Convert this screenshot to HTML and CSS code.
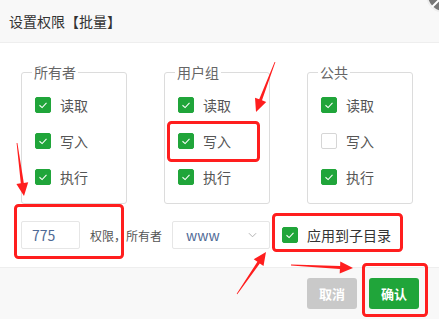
FILE: index.html
```html
<!DOCTYPE html>
<html lang="zh-CN">
<head>
<meta charset="utf-8">
<title>设置权限【批量】</title>
<link rel="stylesheet" href="styles.css">
</head>
<body>
<div class="dialog">
  <div class="head">设置权限【批量】</div>
  <div class="body">
    <div class="groups">
      <fieldset class="group">
        <legend>所有者</legend>
        <label class="opt"><span class="cb on"><svg viewBox="0 0 16 16"><polyline points="4,8.3 7,11 12,5.5"/></svg></span>读取</label>
        <label class="opt"><span class="cb on"><svg viewBox="0 0 16 16"><polyline points="4,8.3 7,11 12,5.5"/></svg></span>写入</label>
        <label class="opt"><span class="cb on"><svg viewBox="0 0 16 16"><polyline points="4,8.3 7,11 12,5.5"/></svg></span>执行</label>
      </fieldset>
      <fieldset class="group">
        <legend>用户组</legend>
        <label class="opt"><span class="cb on"><svg viewBox="0 0 16 16"><polyline points="4,8.3 7,11 12,5.5"/></svg></span>读取</label>
        <label class="opt"><span class="cb on"><svg viewBox="0 0 16 16"><polyline points="4,8.3 7,11 12,5.5"/></svg></span>写入</label>
        <label class="opt"><span class="cb on"><svg viewBox="0 0 16 16"><polyline points="4,8.3 7,11 12,5.5"/></svg></span>执行</label>
      </fieldset>
      <fieldset class="group">
        <legend>公共</legend>
        <label class="opt"><span class="cb on"><svg viewBox="0 0 16 16"><polyline points="4,8.3 7,11 12,5.5"/></svg></span>读取</label>
        <label class="opt"><span class="cb"></span>写入</label>
        <label class="opt"><span class="cb on"><svg viewBox="0 0 16 16"><polyline points="4,8.3 7,11 12,5.5"/></svg></span>执行</label>
      </fieldset>
    </div>
    <div class="row">
      <input class="num" type="text" value="775">
      <span class="hint">权限，所有者</span>
      <div class="select">www<svg class="chev" viewBox="0 0 10 6"><polyline points="1,1 5,5 9,1"/></svg></div>
      <label class="opt sub"><span class="cb on"><svg viewBox="0 0 16 16"><polyline points="4,8.3 7,11 12,5.5"/></svg></span>应用到子目录</label>
    </div>
  </div>
  <div class="foot">
    <button class="btn cancel">取消</button>
    <button class="btn ok">确认</button>
  </div>
</div>
<svg class="overlay" viewBox="0 0 439 319" width="439" height="319">
  <circle class="close" cx="444" cy="-5" r="17"/>
  <line class="close-x" x1="432" y1="7" x2="446" y2="-7"/>
  <g class="mark">
    <rect x="15.5" y="205.5" width="107" height="52" rx="3"/>
    <rect x="168.5" y="122.5" width="90" height="38" rx="3"/>
    <rect x="273.5" y="214.5" width="128" height="36" rx="3"/>
    <rect x="363.5" y="264.5" width="63" height="51" rx="3"/>
  </g>
  <g class="arrow">
    <polygon points="16.6,143 20.8,183.3 16.4,183.9 24,196 28.2,182.3 23.8,182.9 17.4,143"/>
    <polygon points="274.6,61.9 259.2,99.3 255,97.7 256,112 266.2,101.9 262,100.3 275.4,62.1"/>
    <polygon points="237.3,294.3 259.8,263.6 263.5,266.1 266,252 253.7,259.3 257.4,261.8 236.7,293.7"/>
    <polygon points="291,265.4 339.9,268.9 339.7,273.4 353,268 340.3,261.4 340.1,265.9 291,264.6"/>
  </g>
</svg>
</body>
</html>
```

FILE: styles.css
```css
html, body {
  margin: 0;
  padding: 0;
  background: #fff;
}
body {
  width: 439px;
  height: 319px;
  overflow: hidden;
  position: relative;
  font-family: "Noto Sans CJK SC", "Noto Sans", sans-serif;
  color: #555;
}
.dialog {
  display: flex;
  flex-direction: column;
  height: 319px;
}
.head {
  height: 42px;
  line-height: 42px;
  padding-left: 9px;
  background: #f8f8f8;
  border-bottom: 1px solid #eee;
  font-size: 14px;
  color: #333;
}
.body {
  padding: 19px 0 18px 21px;
}
.groups {
  display: flex;
  gap: 37px;
}
.group {
  box-sizing: border-box;
  width: 106px;
  margin: 0;
  padding: 5px 0 8px 10px;
  border: 1px solid #dcdcdc;
  border-radius: 3px;
}
.group legend {
  padding: 0 2px;
  font-size: 14px;
  line-height: 20px;
  color: #666;
}
.opt {
  display: flex;
  align-items: center;
  height: 36px;
  margin-left: 3px;
  font-size: 14px;
  color: #555;
}
.cb {
  box-sizing: border-box;
  width: 16px;
  height: 16px;
  margin-right: 9px;
  border: 1px solid #d6d6d6;
  border-radius: 2px;
  background: #fff;
  flex: none;
}
.cb.on {
  border-color: #20a53a;
  background: #20a53a;
}
.cb svg {
  display: block;
  width: 14px;
  height: 14px;
}
.cb polyline {
  fill: none;
  stroke: #fff;
  stroke-width: 1.2;
}
.row {
  display: flex;
  align-items: center;
  margin-top: 17px;
  height: 28px;
}
.num {
  box-sizing: border-box;
  width: 59px;
  height: 28px;
  margin: 0;
  padding: 0 10px;
  border: 1px solid #e6e6e6;
  border-radius: 2px;
  font-family: inherit;
  font-size: 14px;
  color: #4f6a96;
  outline: none;
}
.hint {
  margin-left: 10px;
  font-size: 12px;
  color: #555;
}
.select {
  box-sizing: border-box;
  display: flex;
  align-items: center;
  justify-content: space-between;
  width: 98px;
  height: 28px;
  margin-left: 10px;
  padding: 0 12px 0 13px;
  border: 1px solid #e6e6e6;
  border-radius: 2px;
  font-size: 14px;
  color: #4f6a96;
}
.chev {
  width: 9px;
  height: 6px;
}
.chev polyline {
  fill: none;
  stroke: #aaa;
  stroke-width: 1;
}
.opt.sub {
  margin-left: 12px;
  height: 28px;
  font-size: 14px;
  color: #333;
}
.foot {
  flex: 1;
  display: flex;
  justify-content: flex-end;
  gap: 12px;
  padding: 10px 20px;
  background: #f8f8f8;
  border-top: 1px solid #eee;
}
.btn {
  width: 50px;
  height: 31px;
  padding: 0;
  border: none;
  border-radius: 3px;
  font-family: inherit;
  font-size: 13px;
  font-weight: bold;
  color: #fff;
}
.btn.cancel {
  background: #c9c9c9;
}
.btn.ok {
  background: #20a53a;
}
.overlay {
  position: absolute;
  left: 0;
  top: 0;
  pointer-events: none;
}
.close {
  fill: #777;
  stroke: #eee;
  stroke-width: 2;
}
.close-x {
  stroke: #fff;
  stroke-width: 2;
}
.mark rect {
  fill: none;
  stroke: #ff1e1e;
  stroke-width: 3;
}
.arrow polygon {
  fill: #ff1e1e;
}
```
